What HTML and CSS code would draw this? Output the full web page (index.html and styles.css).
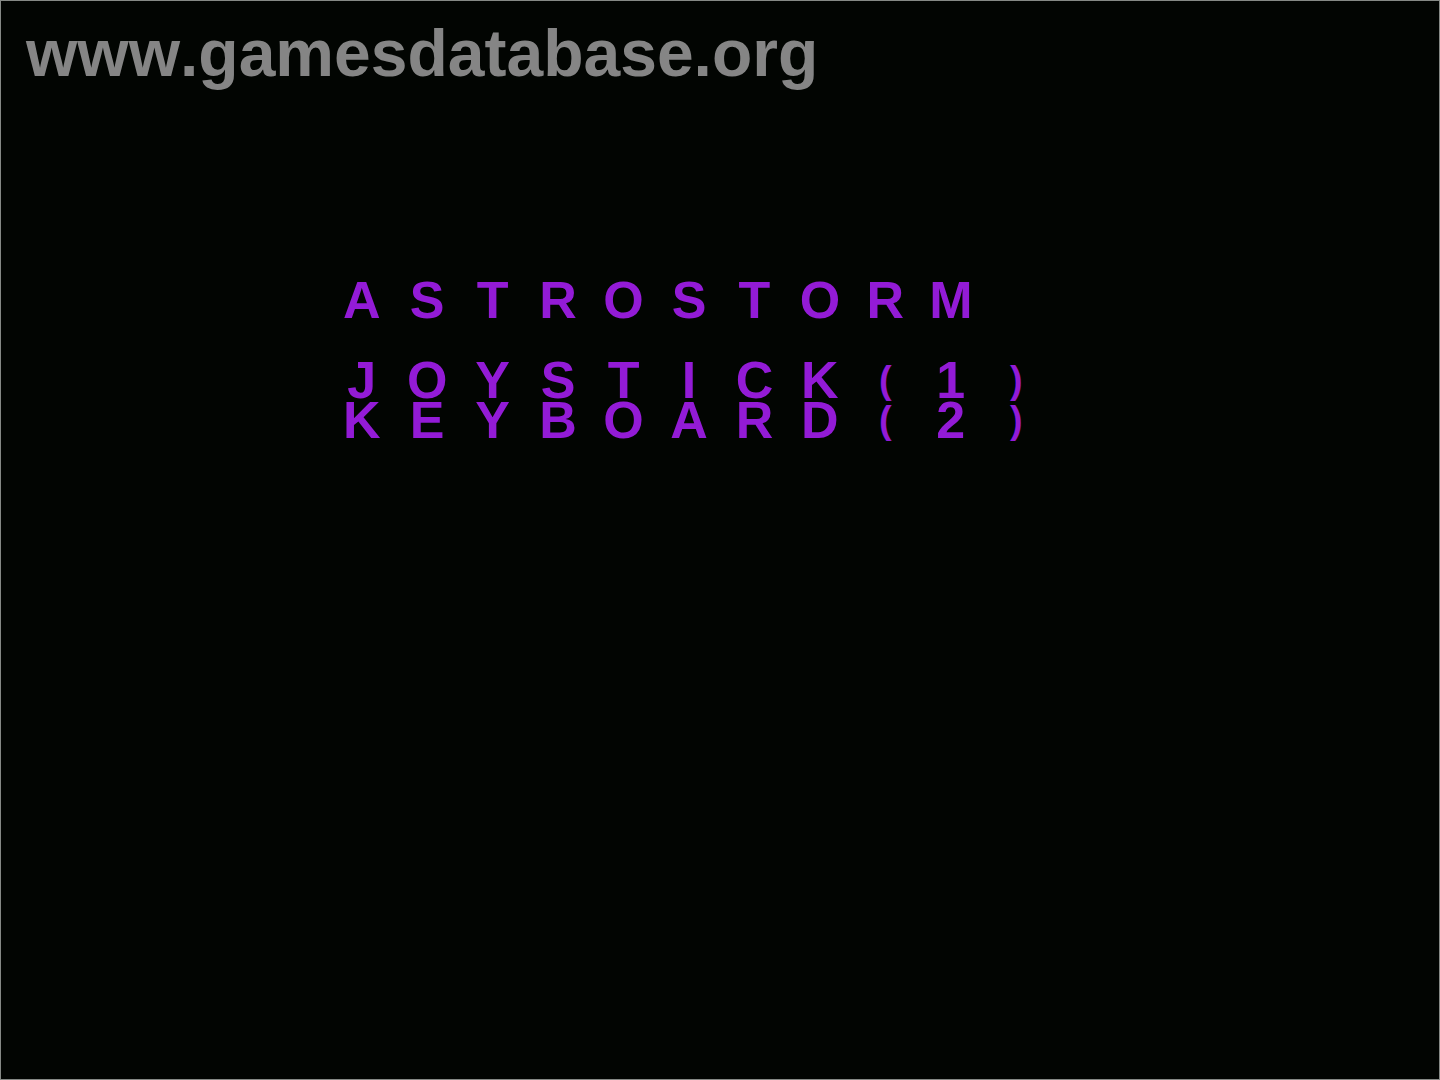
FILE: index.html
```html
<!DOCTYPE html>
<html lang="en">
<head>
<meta charset="utf-8">
<title>Astrostorm</title>
<meta name="viewport" content="width=device-width, initial-scale=1">
<link rel="stylesheet" href="styles.css">
</head>
<body>
<div class="frame">
  <header class="watermark">www.gamesdatabase.org</header>
  <main class="screen">
    <h1 class="line title"><span>A</span><span>S</span><span>T</span><span>R</span><span>O</span><span>S</span><span>T</span><span>O</span><span>R</span><span>M</span></h1>
    <p class="line"><span>J</span><span>O</span><span>Y</span><span>S</span><span>T</span><span>I</span><span>C</span><span>K</span><span class="bracket">(</span><span>1</span><span class="bracket">)</span></p>
    <p class="line"><span>K</span><span>E</span><span>Y</span><span>B</span><span>O</span><span>A</span><span>R</span><span>D</span><span class="bracket">(</span><span>2</span><span class="bracket">)</span></p>
  </main>
</div>
</body>
</html>
```
FILE: styles.css
```css
* {
  box-sizing: border-box;
}

body {
  margin: 0;
  background: #020502;
}

.frame {
  min-height: 100vh;
  padding: 16px 25px;
  border: 1px solid #858985;
}

.watermark {
  color: #858585;
  font: bold 66px/72px "Liberation Sans", Arial, sans-serif;
  font-kerning: none;
}

.screen {
  width: 720px;
  max-width: 100%;
  margin: 191px 0 0 303px;
  color: #931bd6;
  font: bold 52px/40px "Liberation Sans", Arial, sans-serif;
}

/* Eleven equal character cells to a line */
.line {
  display: grid;
  grid-template-columns: repeat(11, 1fr);
  margin: 0;
  font: inherit;
  text-align: center;
}

.title {
  margin-bottom: 40px;
}

/* Brackets stay within the height of the capitals */
.bracket {
  font-size: 38px;
}
```
